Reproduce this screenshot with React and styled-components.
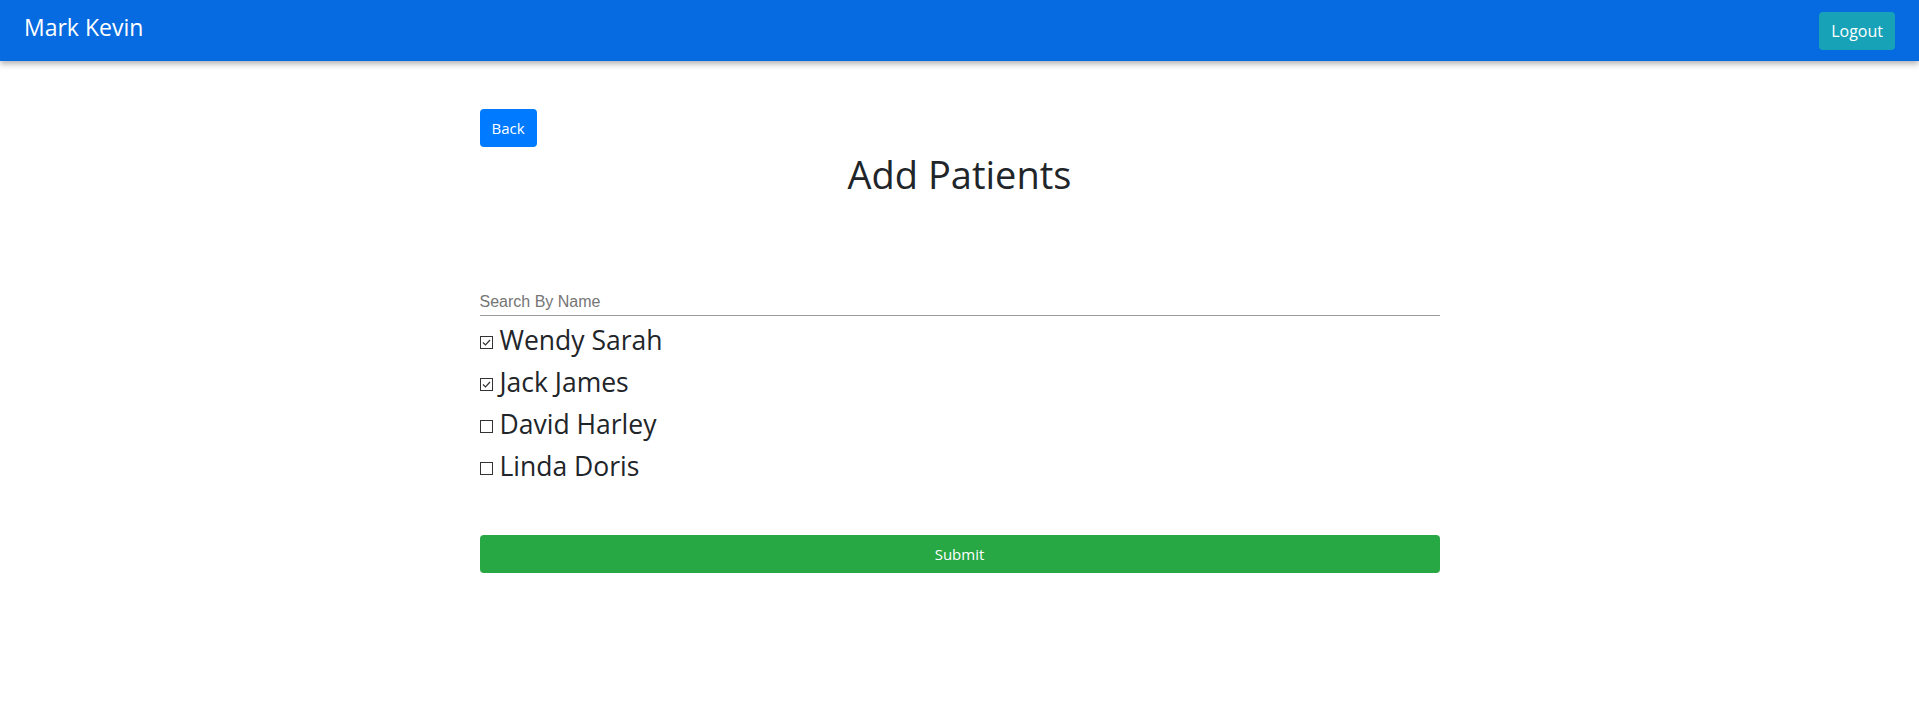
import React, { useState } from "react";
import styled, { createGlobalStyle } from "styled-components";

const GlobalStyle = createGlobalStyle`
  body {
    margin: 0;
    background: #fff;
    color: #212529;
    font-family: "Open Sans", "Noto Sans", sans-serif;
  }
  * { box-sizing: border-box; }
`;

const Navbar = styled.nav`
  height: 61px;
  background-color: #066be0;
  box-shadow: 0 3px 6px rgba(0, 0, 0, 0.3);
  display: flex;
  align-items: center;
  justify-content: space-between;
  padding: 0 24px;
`;

const Brand = styled.span`
  color: #fff;
  font-size: 23px;
  margin-top: -7px;
`;

const Button = styled.button`
  border: none;
  border-radius: 4px;
  color: #fff;
  font-family: inherit;
  font-size: ${(p) => p.size || 15}px;
  height: 38px;
  padding: 0 12px;
  cursor: pointer;
  background-color: ${(p) => p.bg};
  width: ${(p) => (p.block ? "100%" : "auto")};
`;

const Container = styled.main`
  width: 960px;
  margin: 0 auto;
  padding-top: 48px;
`;

const Title = styled.h1`
  margin: 3px 0 0;
  font-size: 38px;
  font-weight: 400;
  line-height: 48px;
  text-align: center;
`;

const Search = styled.input`
  display: block;
  width: 100%;
  margin-top: 90px;
  height: 28px;
  padding: 0;
  border: none;
  border-bottom: 1.5px solid #9a9a9a;
  font-family: "Liberation Sans", Arial, sans-serif;
  font-size: 16px;
  outline: none;
  &::placeholder { color: #757575; }
`;

const List = styled.div`
  margin-top: 7px;
  margin-bottom: 52px;
`;

const Item = styled.label`
  display: flex;
  align-items: center;
  font-size: 26.5px;
  line-height: 34px;
  margin-bottom: 8px;
  cursor: pointer;
`;

const Box = styled.span`
  width: 13px;
  height: 13px;
  border: 1px solid #333;
  margin-right: 7px;
  margin-top: 5px;
  flex: none;
  display: flex;
  align-items: center;
  justify-content: center;
`;

const patients = [
  { name: "Wendy Sarah", checked: true },
  { name: "Jack James", checked: true },
  { name: "David Harley", checked: false },
  { name: "Linda Doris", checked: false },
];

export default function App() {
  const [list, setList] = useState(patients);
  const toggle = (i) =>
    setList(list.map((p, j) => (j === i ? { ...p, checked: !p.checked } : p)));

  return (
    <>
      <GlobalStyle />
      <Navbar>
        <Brand>Mark Kevin</Brand>
        <Button bg="#17a2b8" size={16}>Logout</Button>
      </Navbar>
      <Container>
        <Button bg="#007bff">Back</Button>
        <Title>Add Patients</Title>
        <Search placeholder="Search By Name" />
        <List>
          {list.map((p, i) => (
            <Item key={p.name} onClick={() => toggle(i)}>
              <Box>
                {p.checked && (
                  <svg width="9" height="7" viewBox="0 0 9 7">
                    <path d="M1 3.5 L3.5 6 L8 1" fill="none" stroke="#333" strokeWidth="1.2" />
                  </svg>
                )}
              </Box>
              {p.name}
            </Item>
          ))}
        </List>
        <Button bg="#28a745" block>Submit</Button>
      </Container>
    </>
  );
}
